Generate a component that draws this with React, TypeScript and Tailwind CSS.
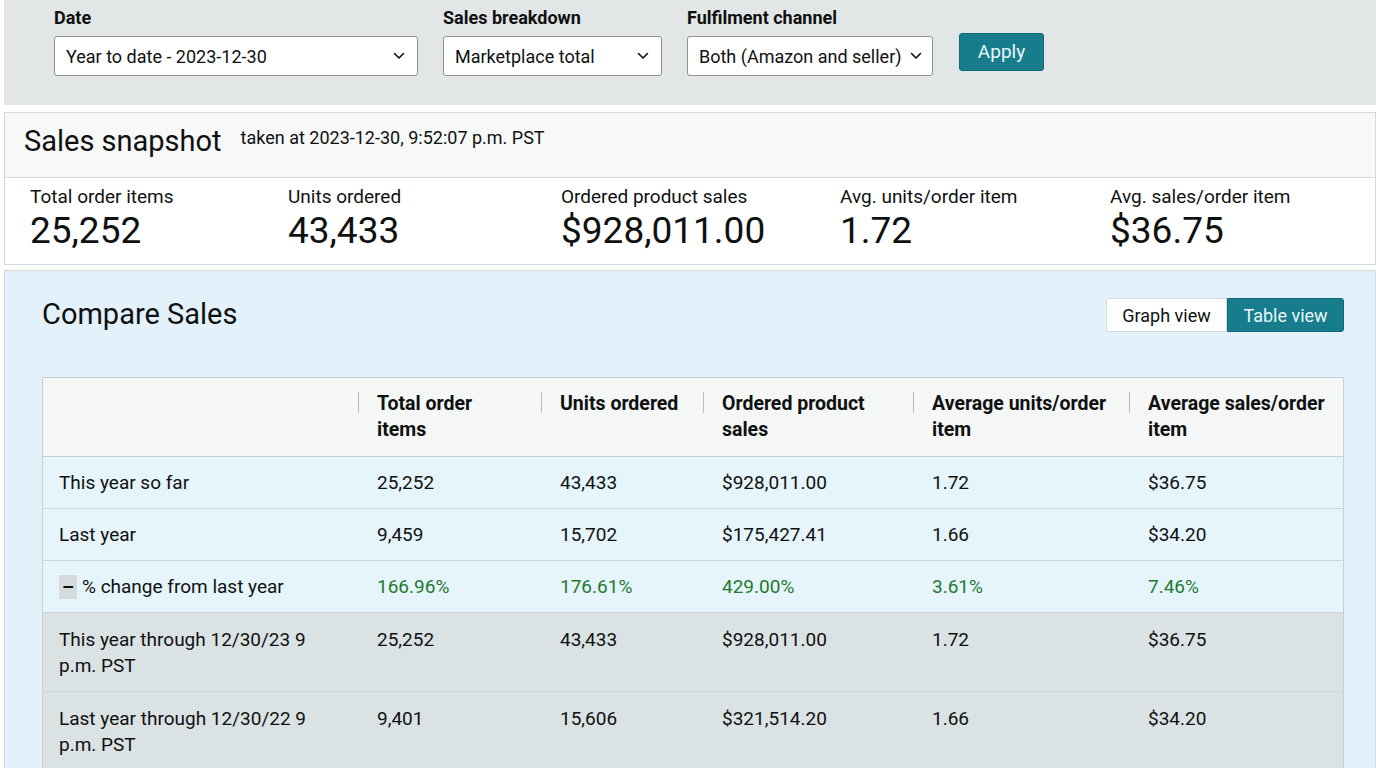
import { ReactNode } from 'react'

const font = { fontFamily: 'Roboto, "Noto Sans", Arial, sans-serif' }

const filters = [
  { label: 'Date', value: 'Year to date - 2023-12-30', width: 'w-[364px]' },
  { label: 'Sales breakdown', value: 'Marketplace total', width: 'w-[219px]' },
  { label: 'Fulfilment channel', value: 'Both (Amazon and seller)', width: 'w-[246px]' },
]

const snapshot = [
  { label: 'Total order items', value: '25,252', width: 'w-[258px]' },
  { label: 'Units ordered', value: '43,433', width: 'w-[273px]' },
  { label: 'Ordered product sales', value: '$928,011.00', width: 'w-[279px]' },
  { label: 'Avg. units/order item', value: '1.72', width: 'w-[270px]' },
  { label: 'Avg. sales/order item', value: '$36.75', width: 'flex-1' },
]

const headers = [
  ['Total order', 'items'],
  ['Units ordered'],
  ['Ordered product', 'sales'],
  ['Average units/order', 'item'],
  ['Average sales/order', 'item'],
]

type Row = {
  label: ReactNode
  values: string[]
  tone: 'blue' | 'gray'
  green?: boolean
  tall?: boolean
}

const rows: Row[] = [
  { label: 'This year so far', values: ['25,252', '43,433', '$928,011.00', '1.72', '$36.75'], tone: 'blue' },
  { label: 'Last year', values: ['9,459', '15,702', '$175,427.41', '1.66', '$34.20'], tone: 'blue' },
  {
    label: (
      <span className="flex items-center gap-[5px]">
        <span className="flex h-[24px] w-[18px] items-center justify-center bg-[#d5dbdc] text-[19px] font-bold leading-none">–</span>
        % change from last year
      </span>
    ),
    values: ['166.96%', '176.61%', '429.00%', '3.61%', '7.46%'],
    tone: 'blue',
    green: true,
  },
  {
    label: (
      <>
        This year through 12/30/23 9
        <br />
        p.m. PST
      </>
    ),
    values: ['25,252', '43,433', '$928,011.00', '1.72', '$36.75'],
    tone: 'gray',
    tall: true,
  },
  {
    label: (
      <>
        Last year through 12/30/22 9
        <br />
        p.m. PST
      </>
    ),
    values: ['9,401', '15,606', '$321,514.20', '1.66', '$34.20'],
    tone: 'gray',
    tall: true,
  },
]

const gridCols = 'grid grid-cols-[315px_183px_162px_210px_216px_1fr]'

function Chevron() {
  return (
    <svg width="12" height="8" viewBox="0 0 12 8" fill="none" className="shrink-0">
      <polyline points="1.5,1.5 6,6 10.5,1.5" stroke="#0f1111" strokeWidth="1.6" strokeLinecap="round" strokeLinejoin="round" />
    </svg>
  )
}

export default function App() {
  return (
    <div className="h-[768px] w-full overflow-hidden bg-white text-[#0f1111]" style={font}>
      {/* filter bar */}
      <div className="ml-[4px] flex h-[105px] items-start gap-[25px] bg-[#e3e6e6] pl-[50px] pt-[6px]">
        {filters.map((f) => (
          <div key={f.label} className="flex flex-col">
            <label className="h-[24px] text-[18px] font-bold leading-[24px]">{f.label}</label>
            <div
              className={`${f.width} mt-[6px] flex h-[40px] items-center justify-between gap-[8px] rounded-[3px] border border-[#8d9096] bg-white pl-[11px] pr-[12px] text-[18px]`}
            >
              <span className="whitespace-nowrap pt-[1px]">{f.value}</span>
              <Chevron />
            </div>
          </div>
        ))}
        <button className="ml-[1px] mt-[27px] h-[38px] w-[85px] rounded-[3px] border border-[#0e6a78] bg-[#177c8b] text-[19px] text-[#e8f8fa]">
          Apply
        </button>
      </div>

      {/* sales snapshot */}
      <div className="ml-[4px] mt-[7px] border border-[#d5d9d9]">
        <div className="flex h-[65px] items-start gap-[19px] border-b border-[#d5d9d9] bg-[#f7f8f8] pl-[19px] pt-[10px]">
          <h2 className="text-[29px] leading-[36px]">Sales snapshot</h2>
          <span className="mt-[3px] text-[18px] leading-[24px]">taken at 2023-12-30, 9:52:07 p.m. PST</span>
        </div>
        <div className="flex h-[86px] bg-white pl-[25px] pt-[7px]">
          {snapshot.map((s) => (
            <div key={s.label} className={`${s.width} flex flex-col`}>
              <span className="text-[19px] leading-[24px]">{s.label}</span>
              <span className="text-[37px] leading-[44px]">{s.value}</span>
            </div>
          ))}
        </div>
      </div>

      {/* compare sales */}
      <div className="ml-[4px] mt-[5px] h-[600px] border border-[#d5d9d9] bg-[#e3f2fa] pl-[37px] pr-[31px]">
        <div className="flex h-[106px] items-start justify-between">
          <h2 className="mt-[25px] text-[29px] leading-[36px]">Compare Sales</h2>
          <div className="mt-[27px] flex h-[34px] text-[18px]">
            <button className="w-[121px] rounded-l-[3px] border border-[#d5d9d9] bg-white">Graph view</button>
            <button className="w-[117px] rounded-r-[3px] border border-[#0e6a78] bg-[#177c8b] text-[#e8f8fa]">Table view</button>
          </div>
        </div>

        <div className="border border-[#c6cfd1] text-[19px]">
          <div className={`${gridCols} h-[79px] border-b border-[#c6cfd1] bg-[#f5f6f6] font-bold`}>
            <div />
            {headers.map((h) => (
              <div key={h[0]} className="relative pl-[19px] pt-[13px] text-[19.5px] leading-[26px]">
                <span className="absolute left-0 top-[14px] h-[21px] w-px bg-[#b5bcbe]" />
                {h.map((line) => (
                  <div key={line} className="whitespace-nowrap">{line}</div>
                ))}
              </div>
            ))}
          </div>

          {rows.map((r, i) => (
            <div
              key={i}
              className={`${gridCols} border-b ${r.tall ? 'h-[79px] pt-[14px]' : 'h-[52px] items-center'} ${
                r.tone === 'blue' ? 'border-[#c9d6dc] bg-[#e6f4fb]' : 'border-[#cdd5d6] bg-[#dbe2e3]'
              } leading-[26px]`}
            >
              <div className="pl-[16px]">{r.label}</div>
              {r.values.map((v, j) => (
                <div key={j} className={`pl-[19px] ${r.green ? 'text-[#1f7a2e]' : ''}`}>
                  {v}
                </div>
              ))}
            </div>
          ))}
        </div>
      </div>
    </div>
  )
}
